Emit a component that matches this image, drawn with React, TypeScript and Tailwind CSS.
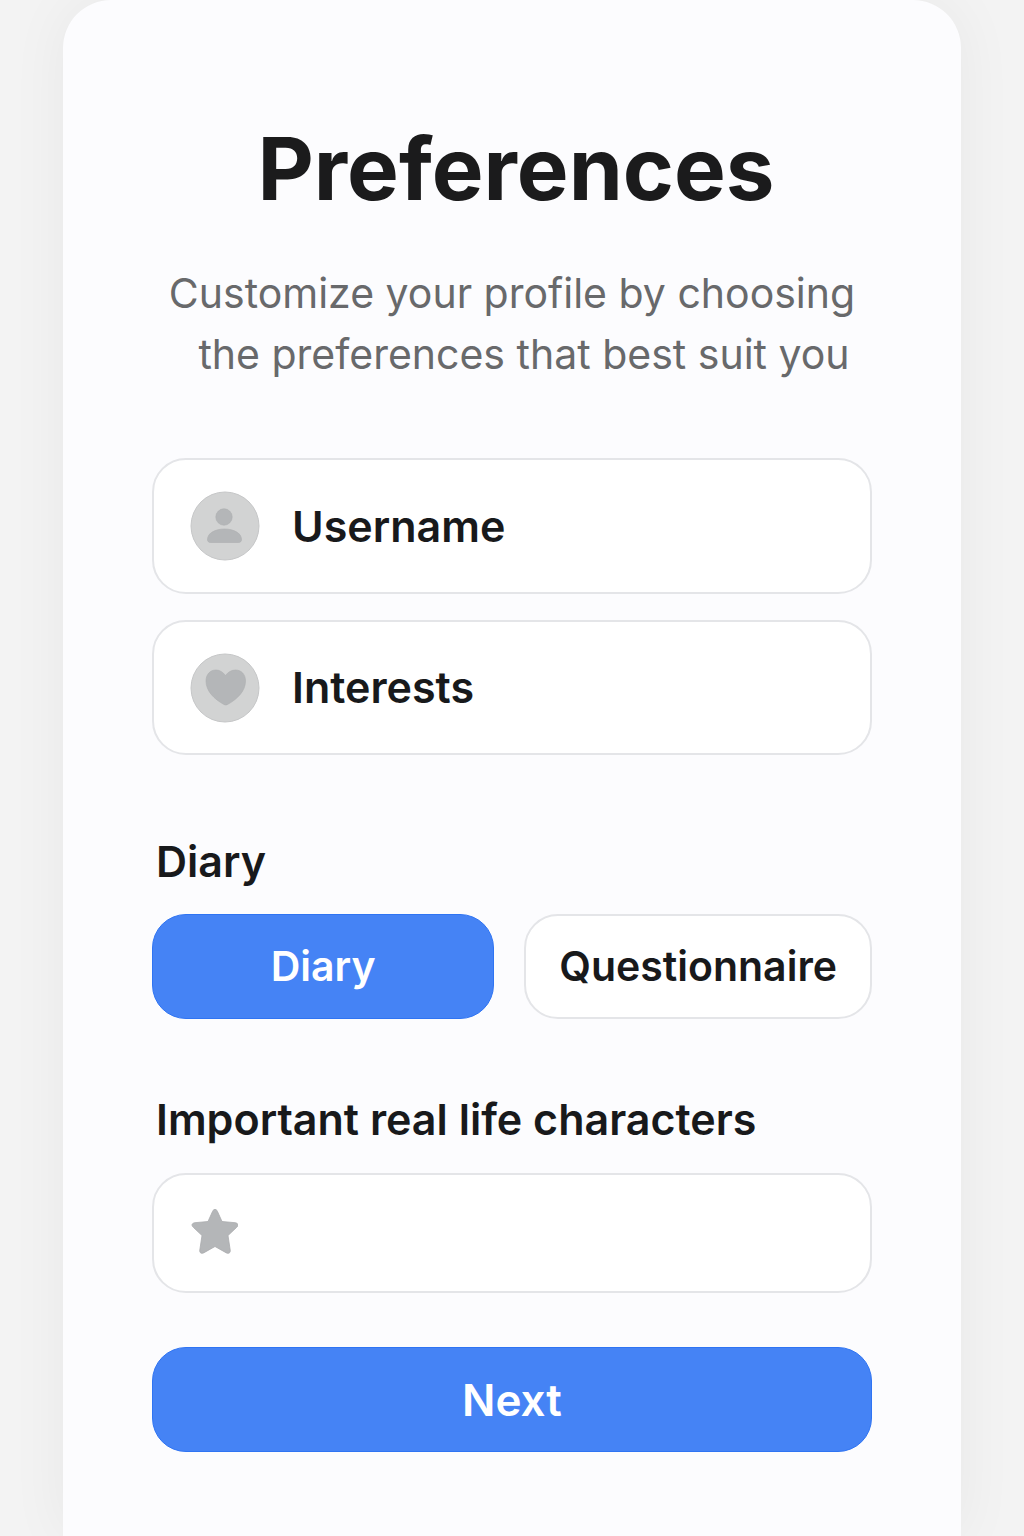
import React from 'react';

function PersonIcon() {
  return (
    <svg viewBox="0 0 70 70" className="size-[70px] shrink-0" aria-hidden="true">
      <circle cx="35" cy="35" r="34" fill="#d2d3d3" stroke="#c6c7c8" />
      <circle cx="34" cy="26" r="8.2" fill="#b4b6b8" stroke="#acaeb0" strokeWidth=".6" />
      <path d="M17.500 48.500c0-6.500 8-10.500 17-10.500s17 4 17 10.500c0 2-1 3-3 3h-28c-2 0-3-1-3-3z" fill="#b4b6b8" stroke="#acaeb0" strokeWidth=".6" />
    </svg>
  );
}

function HeartIcon() {
  return (
    <svg viewBox="0 0 70 70" className="size-[70px] shrink-0" aria-hidden="true">
      <circle cx="35" cy="35" r="34" fill="#d2d3d3" stroke="#c6c7c8" />
      <path d="M35.500 22.500C33 19 29.500 17 26 17c-6 0-10 4.500-10 11 0 10 8 18 18 23.500q1.800 1 3.500 0C47.500 46 55.500 38 55.500 28c0-6.500-4-11-10-11-4 0-7.500 2-10 5.500z" fill="#b4b6b8" stroke="#acaeb0" strokeWidth=".6" />
    </svg>
  );
}

function StarIcon() {
  return (
    <svg viewBox="-1 2 48 48" className="size-12 shrink-0" aria-hidden="true">
      <path d="M21.500 4.500q2.500-5 5 0L31 14.500l13 1.200c3.500.5 3.800 2.800 1.500 4.800L37 28.500l2.200 14.500c.4 3-1.700 4-3.800 2.900L24 39.500l-11.400 6.400c-2.100 1.100-4.200.1-3.800-2.900L11 28.500 2.500 20.500C.2 18.500.5 16.200 4 15.700l13-1.200z" fill="#b4b6b8" stroke="#a9abad" strokeWidth=".8" strokeLinejoin="round" />
    </svg>
  );
}

export default function App() {
  return (
    <div className="min-h-screen bg-[#f3f3f3] px-[63px] font-['Inter',sans-serif] text-[#18191b]">
      <main className="min-h-screen rounded-t-[48px] bg-[#fcfcfe] px-[89px] pt-[115px] pb-[84px] shadow-[0_0_60px_rgba(0,0,0,0.05)]">
        <h1 className="pl-2 text-center text-[87px] leading-[108px] font-bold text-[#1b1b1c]">Preferences</h1>
        <p className="mt-10 text-center text-[41px] leading-[61px] text-[#68696b]">
          <span className="block">Customize your profile by choosing</span>{' '}
          <span className="block pl-6">the preferences that best suit you</span>
        </p>
        <form className="mt-[73px]">
          <label className="flex h-[136px] items-center gap-8 rounded-[34px] border-2 border-[#e4e5e8] bg-white px-9">
            <PersonIcon />
            <input aria-label="Username" placeholder="Username" className="w-full min-w-0 bg-transparent text-[43px] font-semibold outline-none placeholder:text-[#18191b]" />
          </label>
          <label className="mt-[26px] flex h-[135px] items-center gap-8 rounded-[34px] border-2 border-[#e4e5e8] bg-white px-9">
            <HeartIcon />
            <input aria-label="Interests" placeholder="Interests" className="w-full min-w-0 bg-transparent text-[43px] font-semibold outline-none placeholder:text-[#18191b]" />
          </label>
          <h2 className="mt-[79px] pl-1 text-[43px] leading-[54px] font-semibold">Diary</h2>
          <div className="mt-[26px] flex gap-[30px]">
            <button type="button" className="h-[105px] flex-1 rounded-[34px] border border-[#2f74f3] bg-[#4583f5] text-[41px] font-semibold text-white">Diary</button>
            <button type="button" className="h-[105px] rounded-[34px] border-2 border-[#e4e5e8] bg-white px-[33px] text-[41px] font-semibold">Questionnaire</button>
          </div>
          <label htmlFor="characters" className="mt-[73px] block pl-1 text-[43px] leading-[54px] font-semibold">Important real life characters</label>
          <div className="mt-[27px] flex h-[120px] items-center gap-8 rounded-[34px] border-2 border-[#e4e5e8] bg-white px-9">
            <StarIcon />
            <input id="characters" className="w-full min-w-0 bg-transparent text-[43px] font-semibold outline-none" />
          </div>
          <button type="button" className="mt-[54px] h-[105px] w-full rounded-[34px] border border-[#2f74f3] bg-[#4583f5] text-[44px] font-semibold text-white">Next</button>
        </form>
      </main>
    </div>
  );
}
